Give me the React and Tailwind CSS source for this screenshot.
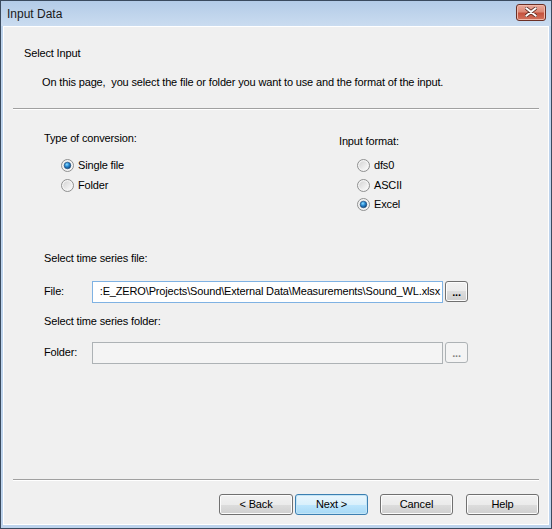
import React from 'react';

const font = { fontFamily: '"Liberation Sans", Arial, sans-serif' };

function Radio({ checked }) {
  return (
    <svg width="13" height="13" viewBox="0 0 13 13" className="shrink-0">
      <defs>
        <linearGradient id="rb-bg" x1="0" y1="0" x2="1" y2="1">
          <stop offset="0" stopColor="#d4d4d4" />
          <stop offset="1" stopColor="#fbfbfb" />
        </linearGradient>
        <radialGradient id="rb-dot" cx="0.4" cy="0.35" r="0.7">
          <stop offset="0" stopColor="#8fe0ff" />
          <stop offset="0.45" stopColor="#2a8ad4" />
          <stop offset="1" stopColor="#0d3d6e" />
        </radialGradient>
      </defs>
      <circle cx="6.5" cy="6.5" r="6" fill="#f4f4f4" stroke="#8e8f8f" strokeWidth="1" />
      <circle cx="6.5" cy="6.5" r="4.3" fill="url(#rb-bg)" />
      {checked && <circle cx="6.5" cy="6.5" r="3.3" fill="url(#rb-dot)" stroke="#1c4a78" strokeWidth="0.6" />}
    </svg>
  );
}

function RadioRow({ label, checked }) {
  return (
    <div className="flex items-center h-[19.5px] gap-[4px]">
      <Radio checked={checked} />
      <span>{label}</span>
    </div>
  );
}

function WinButton({ children, primary, disabled, className = '' }) {
  const look = disabled
    ? 'border-[#adb2b5] bg-[#f4f4f4] text-[#838383]'
    : primary
    ? 'border-[#3c7fb1] bg-[linear-gradient(#eaf6fd_0%,#d9f0fc_50%,#bee6fd_50%,#a7d9f5_100%)] shadow-[inset_0_0_0_1px_#c4e5f6]'
    : 'border-[#707070] bg-[linear-gradient(#f2f2f2_0%,#ebebeb_50%,#dddddd_50%,#cfcfcf_100%)] shadow-[inset_0_0_0_1px_#fcfcfc]';
  return (
    <div className={`flex items-center justify-center border rounded-[3px] ${look} ${className}`}>
      {children}
    </div>
  );
}

export default function App() {
  return (
    <div
      className="w-[552px] h-[529px] border border-[#3a4a5e] bg-[#bdd3ec] flex flex-col text-[11px] leading-[13px] tracking-[-0.15px] text-black overflow-hidden"
      style={font}
    >
      {/* Title bar */}
      <div className="h-[25px] shrink-0 flex items-center justify-between pl-[6px] pr-[5px] bg-[linear-gradient(#b3cbe7,#cadcf0)]">
        <span className="text-[12px] leading-[14px] tracking-normal text-[#1a1a1a]">Input Data</span>
        <div className="w-[30px] h-[17px] mt-[-3px] rounded-[3px] border border-[#6b2f25] bg-[linear-gradient(#e9a99b_0%,#dc8a78_45%,#c5523e_55%,#d2735e_100%)] flex items-center justify-center shadow-[inset_0_0_0_1px_#f0b8aa]">
          <svg width="12" height="10" viewBox="0 0 12 10">
            <path d="M1 1 L11 9 M11 1 L1 9" stroke="#5a2a22" strokeWidth="3.6" strokeLinecap="round" />
            <path d="M1.3 1.2 L10.7 8.8 M10.7 1.2 L1.3 8.8" stroke="#ffffff" strokeWidth="2" strokeLinecap="round" />
          </svg>
        </div>
      </div>

      {/* Client area */}
      <div className="flex-1 mx-[2px] mb-[3px] border border-[#ffffff] bg-[#f0f0f0] flex flex-col">
        <div className="pl-[20px] mt-[20px]">Select Input</div>
        <div className="pl-[38px] mt-[16px]">
          On this page,&nbsp; you select the file or folder you want to use and the format of the input.
        </div>
        <div className="mx-[9px] mt-[19px] h-[1px] bg-[#a0a0a0] border-b border-white box-content" />

        {/* Options */}
        <div className="flex pl-[40px] mt-[22px]">
          <div className="w-[295px]">
            <div>Type of conversion:</div>
            <div className="pl-[17px] mt-[11px]">
              <RadioRow label="Single file" checked />
              <RadioRow label="Folder" />
            </div>
          </div>
          <div className="pt-[3px]">
            <div>Input format:</div>
            <div className="pl-[18px] mt-[8px]">
              <RadioRow label="dfs0" />
              <RadioRow label="ASCII" />
              <RadioRow label="Excel" checked />
            </div>
          </div>
        </div>

        {/* File / folder */}
        <div className="pl-[40px] mt-[37px]">Select time series file:</div>
        <div className="flex items-center pl-[40px] mt-[16px] h-[22px]">
          <span className="w-[48px]">File:</span>
          <div className="w-[351px] h-[22px] border border-[#7fb2e3] bg-white overflow-hidden flex items-center justify-end pr-[2px]">
            <span className="whitespace-nowrap">:E_ZERO\Projects\Sound\External Data\Measurements\Sound_WL.xlsx</span>
          </div>
          <WinButton className="ml-[2px] w-[23px] h-[21px] font-bold leading-[10px]">...</WinButton>
        </div>
        <div className="pl-[40px] mt-[12px]">Select time series folder:</div>
        <div className="flex items-center pl-[40px] mt-[14px] h-[22px]">
          <span className="w-[48px]">Folder:</span>
          <div className="w-[351px] h-[22px] border border-[#adb2b5] bg-[#f4f4f4]" />
          <WinButton disabled className="ml-[2px] w-[23px] h-[21px] font-bold leading-[10px]">...</WinButton>
        </div>

        {/* Footer */}
        <div className="mt-auto mx-[9px] h-[1px] bg-[#a0a0a0] border-b border-white box-content" />
        <div className="flex justify-end pr-[9px] mt-[13px] mb-[9px]">
          <WinButton className="w-[74px] h-[21px]">&lt; Back</WinButton>
          <WinButton primary className="ml-[2px] w-[73px] h-[21px]">Next &gt;</WinButton>
          <WinButton className="ml-[12px] w-[73px] h-[21px]">Cancel</WinButton>
          <WinButton className="ml-[13px] w-[73px] h-[21px]">Help</WinButton>
        </div>
      </div>
    </div>
  );
}
